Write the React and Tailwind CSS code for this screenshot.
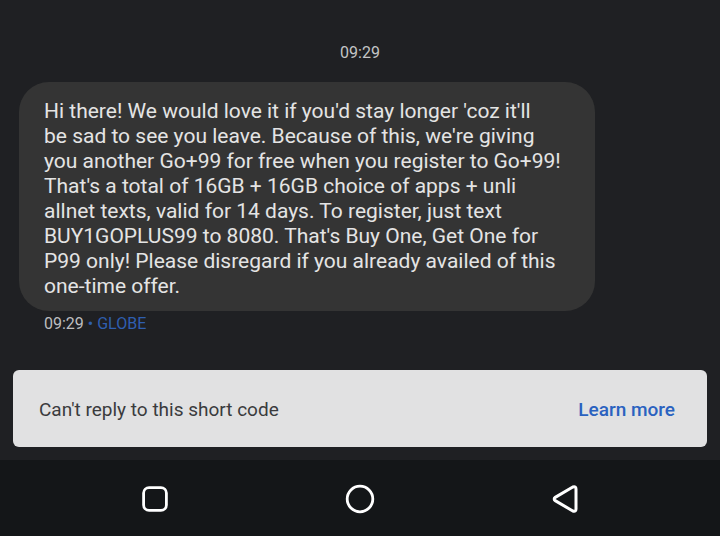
const lines = [
  "Hi there! We would love it if you'd stay longer 'coz it'll",
  "be sad to see you leave. Because of this, we're giving",
  "you another Go+99 for free when you register to Go+99!",
  "That's a total of 16GB + 16GB choice of apps + unli",
  "allnet texts, valid for 14 days. To register, just text",
  "BUY1GOPLUS99 to 8080. That's Buy One, Get One for",
  "P99 only! Please disregard if you already availed of this",
  "one-time offer.",
];

const App = () => {
  return (
    <div className="w-[720px] h-[536px] flex flex-col overflow-hidden bg-[#1f2023] font-['Roboto',sans-serif]">
      <div className="flex-1 flex flex-col">
        <div className="pt-[44px] h-[82px] text-center text-[16px] leading-[18px] text-[#c4c5c6]">09:29</div>

        <div className="ml-[19px] w-[576px] h-[229px] rounded-[30px] bg-[#343434] pl-[25px] pt-[17px] text-[21px] leading-[25px] text-[#e4e4e4] whitespace-nowrap">
          {lines.map((line) => (
            <div key={line}>{line}</div>
          ))}
        </div>

        <div className="ml-[44px] mt-[3px] h-[20px] flex items-center text-[16px] leading-[20px] text-[#bdbec0]">
          <span>09:29</span>
          <span className="ml-[4px] text-[#2f5fb0]">• GLOBE</span>
        </div>

        <div className="mx-[13px] mt-[36px] h-[77px] rounded-[6px] bg-[#e1e1e2] flex items-center justify-between pl-[26px] pr-[32px] pt-[3px]">
          <span className="text-[19px] text-[#3a3b3d]">Can't reply to this short code</span>
          <span className="text-[19px] font-medium text-[#2a62c0]">Learn more</span>
        </div>
      </div>

      <div className="h-[76px] bg-[#141618] flex items-center justify-center">
        <div className="w-[438px] flex items-center justify-between mt-[1px]">
          <svg width="28" height="28" viewBox="0 0 28 28" fill="none" stroke="white" strokeWidth="2.8">
            <rect x="2.6" y="2.6" width="22.8" height="22.8" rx="5.5" />
          </svg>
          <svg width="30" height="30" viewBox="0 0 30 30" fill="none" stroke="white" strokeWidth="2.8">
            <circle cx="15" cy="15" r="12.8" />
          </svg>
          <svg width="28" height="30" viewBox="0 0 28 30" fill="none" stroke="white" strokeWidth="3" strokeLinejoin="round">
            <path d="M3.2 15 Q3.2 14 4.2 13.4 L21.8 3 Q25 1.8 25 5 L25 25 Q25 28.2 21.8 27 L4.2 16.6 Q3.2 16 3.2 15 Z" />
          </svg>
        </div>
      </div>
    </div>
  );
};

export default App;
